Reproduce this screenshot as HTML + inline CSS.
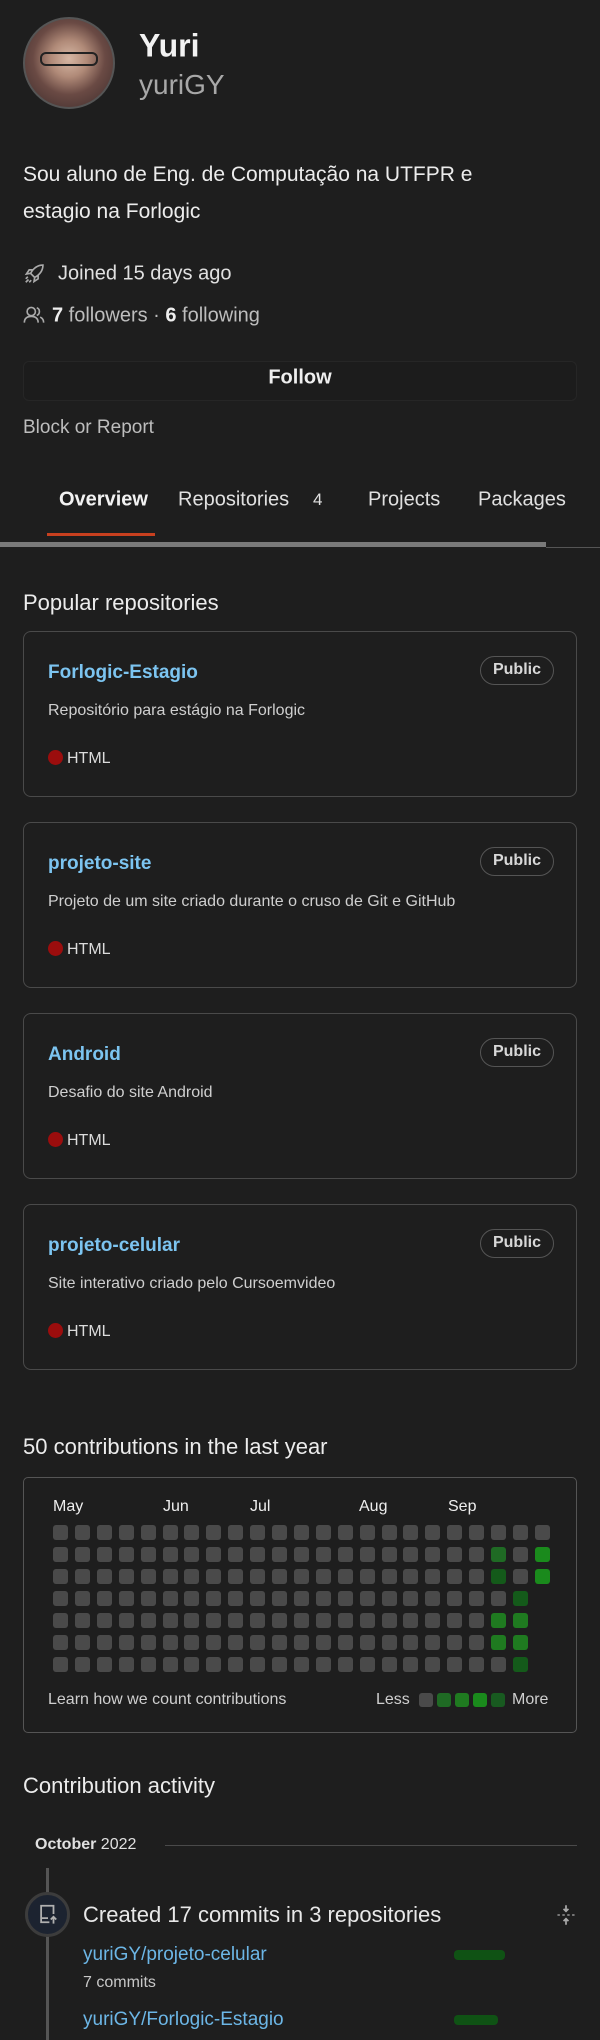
<!DOCTYPE html>
<html><head><meta charset="utf-8"><style>
*{margin:0;padding:0;box-sizing:border-box}
body{width:600px;height:2040px;background:#1e1e1e;color:#e6e6e6;font-family:"Liberation Sans",sans-serif;position:relative;overflow:hidden}
.a{position:absolute;white-space:nowrap}
.c{transform:translateY(-50%)}
.card{position:absolute;left:23px;width:554px;height:166px;border:1.5px solid #4a4a4a;border-radius:8px}
.card .t{position:absolute;left:24px;top:30px;font-size:19px;font-weight:bold;color:#7cc4f0}
.card .p{position:absolute;right:22px;top:24px;height:29px;width:74px;border:1.5px solid #555;border-radius:15px;font-size:16px;font-weight:bold;color:#d8d8d8;text-align:center;line-height:26px}
.card .d{position:absolute;left:24px;top:70px;font-size:16px;color:#cfcfcf}
.card .l{position:absolute;left:24px;top:118px;font-size:16px;color:#dcdcdc}
.card .l i{display:inline-block;width:15px;height:15px;border-radius:50%;background:#9b0d0d;vertical-align:-2px;margin-right:4px}
.cell{position:absolute;width:15px;height:15px;border-radius:3px;background:#4a4a4a}
.tab{position:absolute;top:500px;font-size:20px;transform:translateY(-50%);color:#e0e0e0}
</style></head><body>
<div class="a" style="left:23px;top:17px;width:92px;height:92px;border-radius:50%;border:2px solid #555;background:radial-gradient(circle at 50% 45%,#d6b7a4 0,#b08a78 28%,#6a4a44 55%,#3a2a2a 100%)"></div>
<div class="a" style="left:40px;top:52px;width:58px;height:14px;border:2px solid #222;border-radius:6px"></div>
<div class="a c" style="left:139px;top:46px;font-size:32px;font-weight:bold;color:#f2f2f2">Yuri</div>
<div class="a c" style="left:139px;top:85px;font-size:28px;color:#a8a8a8">yuriGY</div>
<div class="a c" style="left:23px;top:175px;font-size:21px;color:#ececec">Sou aluno de Eng. de Computação na UTFPR e</div>
<div class="a c" style="left:23px;top:212px;font-size:21px;color:#ececec">estagio na Forlogic</div>
<svg class="a" style="left:23px;top:263px" width="22" height="22" viewBox="0 0 16 16" fill="none" stroke="#aaa" stroke-width="1.2"><path d="M14.5 1.5c-4 0-7 2.5-9 6l3 3c3.5-2 6-5 6-9zM5.5 7.5l-3 .5 2-3h3M8.5 10.5l-.5 3 3-2v-3M4 12l-2 2M3.5 10l-1.5 1.5M6 12.5l-1.5 1.5"/></svg>
<div class="a c" style="left:58px;top:274px;font-size:20px;color:#e0e0e0">Joined 15 days ago</div>
<svg class="a" style="left:23px;top:306px" width="22" height="18" viewBox="0 0 16 13" fill="none" stroke="#aaa" stroke-width="1.2"><circle cx="6" cy="4" r="3"/><path d="M1 12c0-3 2-4.5 5-4.5s5 1.5 5 4.5M10 1.2a3 3 0 010 5.6M12.5 8c1.5.7 2.5 2 2.5 4"/></svg>
<div class="a c" style="left:52px;top:316px;font-size:20px;color:#bdbdbd"><b style="color:#eee">7</b> followers · <b style="color:#eee">6</b> following</div>
<div class="a" style="left:23px;top:361px;width:554px;height:40px;border:1px solid #262626;border-radius:6px;background:#1c1c1c"></div>
<div class="a c" style="left:0;width:600px;text-align:center;top:378px;font-size:20px;font-weight:bold;color:#eee">Follow</div>
<div class="a c" style="left:23px;top:428px;font-size:19px;color:#bdbdbd">Block or Report</div>
<div class="tab" style="left:59px;font-weight:bold;color:#f2f2f2">Overview</div>
<div class="tab" style="left:178px">Repositories</div>
<div class="tab" style="left:313px;font-size:17px">4</div>
<div class="tab" style="left:368px">Projects</div>
<div class="tab" style="left:478px">Packages</div>
<div class="a" style="left:47px;top:533px;width:108px;height:3px;background:#c8401f"></div>
<div class="a" style="left:0;top:542px;width:546px;height:5px;background:#7a7a7a"></div>
<div class="a" style="left:546px;top:547px;width:54px;height:1px;background:#555"></div>
<div class="a c" style="left:23px;top:603px;font-size:22px;color:#ececec">Popular repositories</div>

<div class="card" style="top:631px"><div class="t">Forlogic-Estagio</div><div class="p">Public</div><div class="d">Repositório para estágio na Forlogic</div><div class="l"><i></i>HTML</div></div>
<div class="card" style="top:822px"><div class="t">projeto-site</div><div class="p">Public</div><div class="d">Projeto de um site criado durante o cruso de Git e GitHub</div><div class="l"><i></i>HTML</div></div>
<div class="card" style="top:1013px"><div class="t">Android</div><div class="p">Public</div><div class="d">Desafio do site Android</div><div class="l"><i></i>HTML</div></div>
<div class="card" style="top:1204px"><div class="t">projeto-celular</div><div class="p">Public</div><div class="d">Site interativo criado pelo Cursoemvideo</div><div class="l"><i></i>HTML</div></div>

<div class="a c" style="left:23px;top:1447px;font-size:22px;color:#ececec">50 contributions in the last year</div>
<div class="a" style="left:23px;top:1477px;width:554px;height:256px;border:1.5px solid #555;border-radius:5px"></div>
<div class="a c" style="left:53px;top:1507px;font-size:16px;color:#eee">May</div>
<div class="a c" style="left:163px;top:1507px;font-size:16px;color:#eee">Jun</div>
<div class="a c" style="left:250px;top:1507px;font-size:16px;color:#eee">Jul</div>
<div class="a c" style="left:359px;top:1507px;font-size:16px;color:#eee">Aug</div>
<div class="a c" style="left:448px;top:1507px;font-size:16px;color:#eee">Sep</div>
<div id="g"></div>
<div class="a c" style="left:48px;top:1700px;font-size:16px;color:#cfcfcf">Learn how we count contributions</div>
<div class="a c" style="left:376px;top:1700px;font-size:16px;color:#cfcfcf">Less</div>
<div class="cell" style="left:419px;top:1693px;width:14px;height:14px"></div>
<div class="cell" style="left:437px;top:1693px;width:14px;height:14px;background:#1f6a24"></div>
<div class="cell" style="left:455px;top:1693px;width:14px;height:14px;background:#1f7a20"></div>
<div class="cell" style="left:473px;top:1693px;width:14px;height:14px;background:#1a8a1c"></div>
<div class="cell" style="left:491px;top:1693px;width:14px;height:14px;background:#185a20"></div>
<div class="a c" style="left:512px;top:1700px;font-size:16px;color:#cfcfcf">More</div>

<div class="a c" style="left:23px;top:1786px;font-size:22px;color:#ececec">Contribution activity</div>
<div class="a c" style="left:35px;top:1845px;font-size:16px;color:#e0e0e0"><b>October</b> 2022</div>
<div class="a" style="left:165px;top:1845px;width:412px;height:1px;background:#4a4a4a"></div>
<div class="a" style="left:46px;top:1868px;width:3px;height:172px;background:#555"></div>
<div class="a" style="left:25px;top:1892px;width:45px;height:45px;border-radius:50%;background:#1c2330;border:3px solid #3c3c3c"></div>
<svg class="a" style="left:37px;top:1903px" width="22" height="22" viewBox="0 0 16 16" fill="none" stroke="#b0b0b0" stroke-width="1.3"><path d="M9 14H3V2h9v6M3 11h5M12 15V10M10 12l2-2 2 2"/></svg>
<div class="a c" style="left:83px;top:1915px;font-size:22px;color:#e8e8e8">Created 17 commits in 3 repositories</div>
<svg class="a" style="left:556px;top:1904px" width="20" height="22" viewBox="0 0 16 18" fill="#aaa"><path d="M8 1v5M6 4l2 2 2-2" stroke="#aaa" fill="none" stroke-width="1.4"/><path d="M1 9h2M5 9h2M9 9h2M13 9h2" stroke="#aaa" stroke-width="1"/><path d="M8 17v-5M6 14l2-2 2 2" stroke="#aaa" fill="none" stroke-width="1.4"/></svg>
<div class="a c" style="left:83px;top:1955px;font-size:19px;color:#6cb6e6">yuriGY/projeto-celular</div>
<div class="a" style="left:454px;top:1950px;width:51px;height:10px;border-radius:4px;background:#0f5214"></div>
<div class="a c" style="left:83px;top:1983px;font-size:16px;color:#c8c8c8">7 commits</div>
<div class="a c" style="left:83px;top:2020px;font-size:19px;color:#6cb6e6">yuriGY/Forlogic-Estagio</div>
<div class="a" style="left:454px;top:2015px;width:44px;height:10px;border-radius:4px;background:#0f5214"></div>
<script>
var g=document.getElementById('g'),h='';
var green={'20,1':'#1f6a24','22,1':'#1a8a1c','20,2':'#145a1a','22,2':'#1a8a1c','21,3':'#145a1a','20,4':'#1f7a20','21,4':'#1f7a20','20,5':'#1f7a20','21,5':'#1f7a20','21,6':'#145a1a'};
for(var c=0;c<23;c++)for(var r=0;r<7;r++){if(c==22&&r>2)continue;var col=green[c+','+r]||'#4a4a4a';
h+='<div class="cell" style="left:'+(53+c*21.9)+'px;top:'+(1525+r*22)+'px;background:'+col+'"></div>';}
g.innerHTML=h;
</script>
</body></html>
